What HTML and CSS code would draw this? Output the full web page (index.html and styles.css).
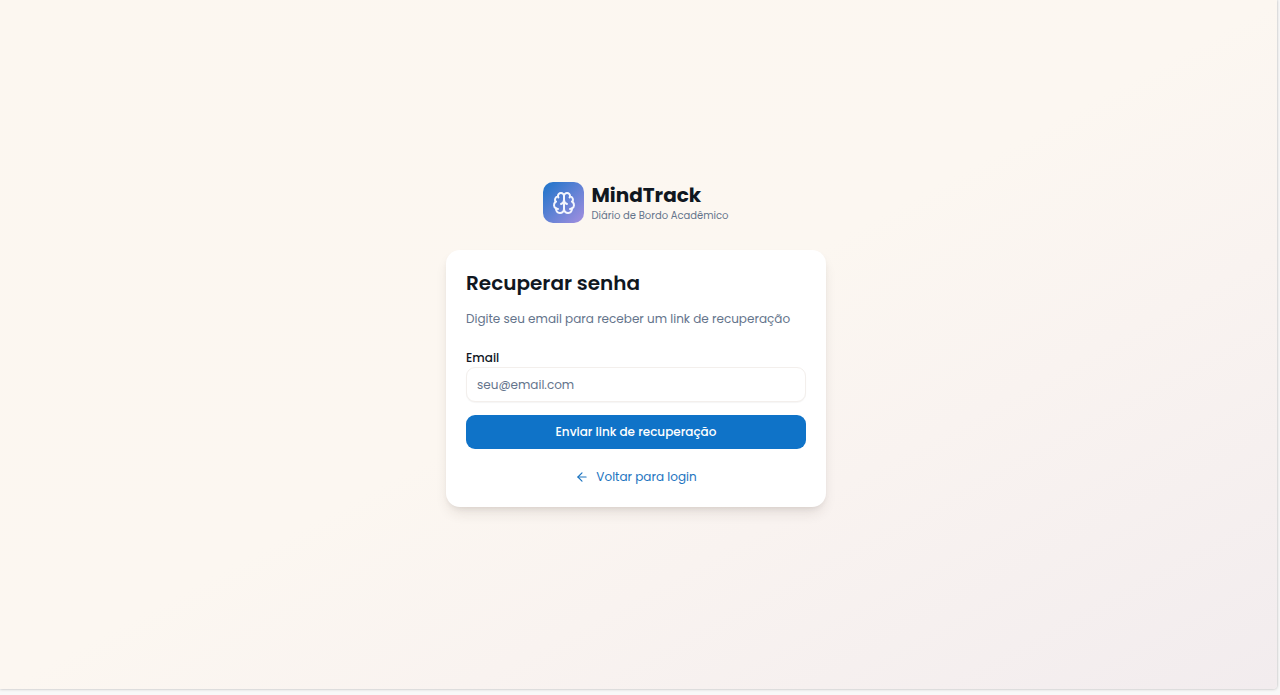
FILE: index.html
```html
<!DOCTYPE html>
<html lang="pt-BR">
<head>
<meta charset="utf-8">
<meta name="viewport" content="width=device-width, initial-scale=1">
<title>MindTrack</title>
<link rel="stylesheet" href="styles.css">
</head>
<body>
<main class="screen">
  <div class="column">
    <header class="brand">
      <div class="brand-mark">
        <svg class="brand-icon" viewBox="0 0 24 24" aria-hidden="true">
          <path d="M12 5a3 3 0 1 0-5.997.125 4 4 0 0 0-2.526 5.77 4 4 0 0 0 .556 6.588A4 4 0 1 0 12 18Z"/>
          <path d="M12 5a3 3 0 1 1 5.997.125 4 4 0 0 1 2.526 5.77 4 4 0 0 1-.556 6.588A4 4 0 1 1 12 18Z"/>
          <path d="M15 13a4.5 4.5 0 0 1-3-4 4.5 4.5 0 0 1-3 4"/>
          <path d="M17.599 6.5a3 3 0 0 0 .399-1.375"/>
          <path d="M6.003 5.125A3 3 0 0 0 6.401 6.5"/>
          <path d="M3.477 10.896a4 4 0 0 1 .585-.396"/>
          <path d="M19.938 10.5a4 4 0 0 1 .585.396"/>
          <path d="M6 18a4 4 0 0 1-1.967-.516"/>
          <path d="M19.967 17.484A4 4 0 0 1 18 18"/>
        </svg>
      </div>
      <div class="brand-text">
        <h1 class="brand-name">MindTrack</h1>
        <p class="brand-tagline">Diário de Bordo Acadêmico</p>
      </div>
    </header>
    <section class="card">
      <h2 class="card-title">Recuperar senha</h2>
      <p class="card-description">Digite seu email para receber um link de recuperação</p>
      <form class="form">
        <div class="field">
          <label class="label" for="email">Email</label>
          <input class="input" id="email" type="email" placeholder="seu@email.com">
        </div>
        <button class="submit" type="submit">Enviar link de recuperação</button>
      </form>
      <a class="back" href="#login">
        <svg class="back-icon" viewBox="0 0 24 24" aria-hidden="true"><path d="m12 19-7-7 7-7"/><path d="M19 12H5"/></svg>
        <span>Voltar para login</span>
      </a>
    </section>
  </div>
</main>
</body>
</html>
```
FILE: styles.css
```css
* {
  box-sizing: border-box;
}

body {
  display: flex;
  min-height: 100vh;
  margin: 0;
  padding: 0 3px 6px 0;
  background: #f8f8f8;
  color: #10171f;
  font-family: Poppins, Inter, sans-serif;
  font-size: 12px;
  line-height: 20px;
}

h1, h2, p {
  margin: 0;
}

svg {
  fill: none;
  stroke: currentColor;
  stroke-width: 2;
  stroke-linecap: round;
  stroke-linejoin: round;
}

.screen {
  display: flex;
  flex: 1;
  align-items: center;
  justify-content: center;
  padding: 16px 21px 16px 16px;
  border-bottom-right-radius: 4px;
  background: linear-gradient(to bottom right, #fcf7f0 0%, #fcf7f1 50%, #f9f3f0 68%, #f2ecee 100%);
  box-shadow: 0 0 3px rgba(0, 0, 0, 0.3);
}

.column {
  display: flex;
  flex-direction: column;
  gap: 27px;
  width: 100%;
  max-width: 380px;
}

.brand {
  display: flex;
  align-items: center;
  justify-content: center;
  gap: 7px;
}

.brand-mark {
  display: flex;
  align-items: center;
  justify-content: center;
  width: 41px;
  height: 41px;
  border-radius: 10px;
  background: linear-gradient(135deg, #1c74c9, #a48fe0);
  color: #f4f6fd;
}

.brand-icon {
  width: 24px;
  height: 24px;
}

.brand-name {
  font-size: 20px;
  font-weight: 700;
  line-height: 26px;
}

.brand-tagline {
  color: #64748b;
  font-size: 10px;
  line-height: 15px;
}

.card {
  padding: 20px;
  border-radius: 14px;
  background: #fff;
  box-shadow: 0 8px 14px -3px rgba(60, 40, 30, 0.12), 0 3px 6px -3px rgba(60, 40, 30, 0.12);
}

.card-title {
  font-size: 20px;
  font-weight: 600;
  line-height: 27px;
}

.card-description {
  margin-top: 12px;
  color: #64748b;
}

.form {
  display: flex;
  flex-direction: column;
  gap: 13px;
  margin-top: 20px;
}

.field {
  display: flex;
  flex-direction: column;
}

.label {
  font-weight: 500;
  line-height: 18px;
}

.input {
  width: 100%;
  height: 35px;
  padding: 0 10px;
  border: 1px solid #f3efec;
  border-radius: 9px;
  background: #fff;
  box-shadow: 0 1px 1px rgba(0, 0, 0, 0.04);
  color: inherit;
  font: inherit;
}

.input::placeholder {
  color: #64748b;
  opacity: 1;
}

.submit {
  height: 34px;
  border: 0;
  border-radius: 9px;
  background: #0f73c8;
  color: #fff;
  font: inherit;
  font-weight: 500;
}

.back {
  display: flex;
  align-items: center;
  justify-content: center;
  gap: 7px;
  margin-top: 18px;
  color: #1c74c0;
  text-decoration: none;
}

.back-icon {
  width: 14px;
  height: 14px;
}
```
